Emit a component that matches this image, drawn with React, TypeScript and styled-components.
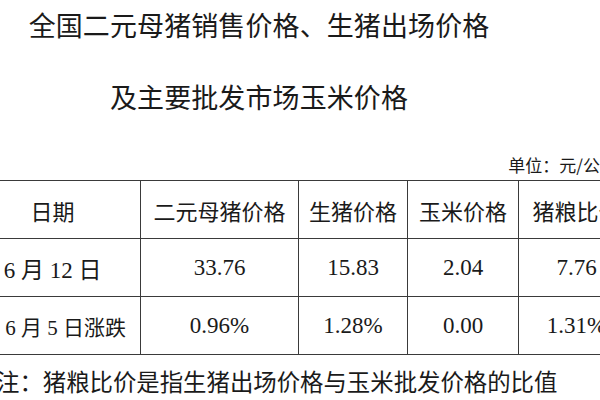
import React from "react";
import styled, { createGlobalStyle } from "styled-components";

const Global = createGlobalStyle`
  html, body { margin: 0; padding: 0; background: #fff; }
  body { width: 600px; height: 400px; overflow: hidden; }
`;

const Page = styled.div`
  width: 600px;
  height: 400px;
  overflow: hidden;
  background: #fff;
  color: #1a1a1a;
  font-family: "Noto Sans CJK SC", "Noto Sans", sans-serif;
`;

const Doc = styled.div`
  margin-left: -36px;
  width: 670px;
  display: flex;
  flex-direction: column;
`;

const Title = styled.h1`
  margin: 0;
  padding-top: 7px;
  width: 590px;
  display: flex;
  flex-direction: column;
  align-items: center;
  gap: 36px;
  font-size: 27px;
  font-weight: 400;
  line-height: 36px;
  letter-spacing: 0.1px;
`;

const Unit = styled.div`
  margin-top: 40px;
  padding-right: 17px;
  text-align: right;
  font-size: 17px;
  line-height: 20px;
  height: 20px;
  margin-bottom: 5px;
  white-space: nowrap;
  font-family: "Noto Sans CJK SC", sans-serif;
`;

const Table = styled.table`
  border-collapse: collapse;
  table-layout: fixed;
  width: 670px;
`;

const Col = styled.col<{ $w: number }>`
  width: ${(p) => p.$w}px;
`;

const Th = styled.th`
  border: 1px solid #3a3a3a;
  height: 57px;
  padding: 0;
  font-weight: 400;
  font-size: 22px;
  text-align: center;
  white-space: nowrap;
  font-family: "Noto Sans CJK SC", sans-serif;
`;

const Td = styled.td<{ $size?: number }>`
  border: 1px solid #3a3a3a;
  height: 57px;
  padding: 0;
  text-align: center;
  white-space: nowrap;
  font-size: ${(p) => p.$size ?? 23}px;
  font-family: "Liberation Serif", "Noto Sans CJK SC", serif;
`;

const Note = styled.p`
  margin: 11px 0 0 32px;
  font-size: 23.4px;
  line-height: 30px;
  white-space: nowrap;
  font-family: "Noto Sans CJK SC", sans-serif;
`;

const widths = [176, 158, 109, 111, 116];
const headers = ["日期", "二元母猪价格", "生猪价格", "玉米价格", "猪粮比价"];
const rows: { cells: string[]; size?: number }[] = [
  { cells: ["6 月 12 日", "33.76", "15.83", "2.04", "7.76"] },
  { cells: ["较 6 月 5 日涨跌", "0.96%", "1.28%", "0.00", "1.31%"], size: 21 },
];

export default function App() {
  return (
    <Page>
      <Global />
      <Doc>
        <Title>
          <span>全国二元母猪销售价格、生猪出场价格</span>
          <span>及主要批发市场玉米价格</span>
        </Title>
        <Unit>单位：元/公斤</Unit>
        <Table>
          <colgroup>
            {widths.map((w, i) => (
              <Col key={i} $w={w} />
            ))}
          </colgroup>
          <thead>
            <tr>
              {headers.map((h) => (
                <Th key={h}>{h}</Th>
              ))}
            </tr>
          </thead>
          <tbody>
            {rows.map((r, ri) => (
              <tr key={ri}>
                {r.cells.map((c, ci) => (
                  <Td key={ci} $size={ci === 0 ? r.size : undefined}>
                    {c}
                  </Td>
                ))}
              </tr>
            ))}
          </tbody>
        </Table>
        <Note>注：猪粮比价是指生猪出场价格与玉米批发价格的比值</Note>
      </Doc>
    </Page>
  );
}
